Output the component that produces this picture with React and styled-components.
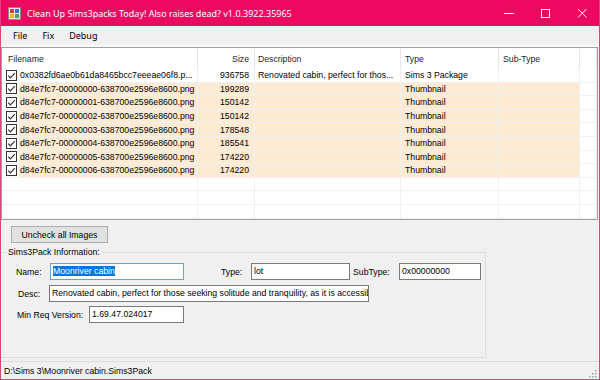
import React from 'react';
import styled, { createGlobalStyle } from 'styled-components';

const GlobalStyle = createGlobalStyle`
  html, body {
    margin: 0;
    padding: 0;
    background: #f0f0f0;
  }
  body {
    font-family: "Liberation Sans", Arial, sans-serif;
  }
`;

const Window = styled.div`
  width: 600px;
  height: 380px;
  box-sizing: border-box;
  display: flex;
  flex-direction: column;
  background: #f0f0f0;
  border: 1px solid #e2407f;
  border-top: none;
  overflow: hidden;
`;

const TitleBar = styled.div`
  height: 26px;
  flex: none;
  margin: 0 -1px;
  display: flex;
  align-items: center;
  background: #eb0a60;
  color: #fff;
  font-family: "Noto Sans", sans-serif;
  font-size: 9px;
`;

const AppIcon = styled.svg`
  margin: 0 6px 0 8px;
  flex: none;
`;

const Title = styled.div`
  flex: 1;
  white-space: nowrap;
`;

const WinButton = styled.div`
  width: 36.5px;
  height: 26px;
  display: flex;
  align-items: center;
  justify-content: center;
`;

const MenuBar = styled.div`
  height: 19px;
  flex: none;
  display: flex;
  align-items: center;
  gap: 15px;
  padding-left: 12px;
  background: #f0f0f0;
  font-family: "Noto Sans", sans-serif;
  font-size: 9px;
  color: #000;
`;

const MenuItem = styled.span``;

const MenuGap = styled.div`
  height: 2px;
  flex: none;
  background: #f9f9f9;
`;

const COLS = '196px 57px 146px 98px 81px 1fr';

const List = styled.div`
  height: 173px;
  flex: none;
  margin-right: 1px;
  box-sizing: border-box;
  border: 1px solid #a0a0a0;
  background: #fff;
  overflow: hidden;
  font-size: 8.7px;
  color: #000;
`;

const Header = styled.div`
  display: grid;
  grid-template-columns: ${COLS};
  height: 21px;
`;

const HeadCell = styled.div`
  display: flex;
  align-items: center;
  justify-content: ${(p) => (p.$right ? 'flex-end' : 'flex-start')};
  padding: 0 ${(p) => (p.$right ? '5px' : '0')} 0 ${(p) => p.$pl || 4}px;
  border-right: 1px solid #e5e5e5;
  margin: 1px 0 1px;
  color: #1e1e1e;
  white-space: nowrap;
`;

const Row = styled.div`
  display: grid;
  grid-template-columns: ${COLS};
  height: 13.6px;
  box-sizing: border-box;
  border-bottom: 1px solid #f0f0f0;
`;

const Cell = styled.div`
  display: flex;
  align-items: center;
  justify-content: ${(p) => (p.$right ? 'flex-end' : 'flex-start')};
  padding: 0 ${(p) => (p.$right ? '5px' : '0')} 0 ${(p) => (p.$right ? 0 : p.$pl || 4)}px;
  background: ${(p) => (p.$hl ? '#fdead2' : 'transparent')};
  border-right: 1px solid #f0f0f0;
  white-space: nowrap;
  overflow: hidden;
  min-width: 0;
`;

const NameCell = styled.div`
  display: flex;
  align-items: center;
  padding-left: 4px;
  border-right: 1px solid #f0f0f0;
  overflow: hidden;
  min-width: 0;
`;

const NameText = styled.div`
  flex: 1;
  align-self: stretch;
  display: flex;
  align-items: center;
  margin-left: 2px;
  padding-left: 1px;
  background: ${(p) => (p.$hl ? '#fdead2' : 'transparent')};
  white-space: nowrap;
  overflow: hidden;
`;

const Panel = styled.div`
  flex: 1;
  display: flex;
  flex-direction: column;
  align-items: flex-start;
  font-size: 8.7px;
  color: #000;
`;

const Button = styled.div`
  margin: 6px 0 0 10px;
  width: 97px;
  height: 17px;
  box-sizing: border-box;
  display: flex;
  align-items: center;
  justify-content: center;
  background: #e1e1e1;
  border: 1px solid #adadad;
`;

const GroupBox = styled.fieldset`
  margin: 4px 0 0;
  padding: 0;
  width: 485px;
  height: 111px;
  box-sizing: border-box;
  border: 1px solid #dcdcdc;
  border-left: none;
  min-inline-size: 0;
`;

const Legend = styled.legend`
  margin-left: 5px;
  padding: 0 2px;
  font-size: 8.7px;
  line-height: 11px;
`;

const FormRow = styled.div`
  display: flex;
  align-items: center;
  margin-top: ${(p) => p.$mt}px;
  padding-left: ${(p) => p.$pl}px;
`;

const Label = styled.div`
  width: ${(p) => p.$w}px;
  margin-left: ${(p) => p.$ml || 0}px;
  flex: none;
  white-space: nowrap;
`;

const TextBox = styled.div`
  width: ${(p) => p.$w}px;
  height: 17px;
  flex: none;
  box-sizing: border-box;
  border: 1px solid ${(p) => (p.$focus ? '#6f9fd3' : '#7a7a7a')};
  background: #fff;
  padding: 0 2px;
  line-height: 15px;
  white-space: nowrap;
  overflow: hidden;
`;

const Selected = styled.span`
  background: #0078d7;
  color: #fff;
`;

const StatusBar = styled.div`
  height: 18px;
  flex: none;
  box-sizing: border-box;
  border-top: 1px solid #dadada;
  display: flex;
  align-items: center;
  justify-content: space-between;
  padding-left: 3px;
  font-size: 8.7px;
  color: #000;
`;

const Grip = styled.svg`
  align-self: flex-end;
  margin: 0 2px 1px 0;
`;

function CheckBox() {
  return (
    <svg width="11" height="11" viewBox="0 0 11 11" style={{ flex: 'none' }}>
      <rect x="0.5" y="0.5" width="10" height="10" fill="#fff" stroke="#333" />
      <polyline points="2.2,5.6 4.4,7.8 8.8,3.2" fill="none" stroke="#333" strokeWidth="1.2" />
    </svg>
  );
}

const rows = [
  { name: '0x0382fd6ae0b61da8465bcc7eeeae06f8.p...', size: '936758', desc: 'Renovated cabin, perfect for thos...', type: 'Sims 3 Package', hl: false },
  ...['199289', '150142', '150142', '178548', '185541', '174220', '174220'].map((size, i) => ({
    name: `d84e7fc7-0000000${i}-638700e2596e8600.png`,
    size,
    desc: '',
    type: 'Thumbnail',
    hl: true,
  })),
];

export default function App() {
  return (
    <>
      <GlobalStyle />
      <Window>
        <TitleBar>
          <AppIcon width="13" height="13" viewBox="0 0 13 13">
            <rect x="0.5" y="0.5" width="12" height="12" fill="#e8e8e8" stroke="#8a8a8a" />
            <rect x="2" y="2" width="4" height="4" fill="#d93a2b" />
            <rect x="7" y="2" width="4" height="4" fill="#3a6fd0" />
            <rect x="2" y="7" width="4" height="4" fill="#f0b429" />
            <rect x="7" y="7" width="4" height="4" fill="#4aa35a" />
          </AppIcon>
          <Title>Clean Up Sims3packs Today! Also raises dead? v1.0.3922.35965</Title>
          <WinButton>
            <svg width="10" height="10" viewBox="0 0 10 10">
              <line x1="0" y1="5.5" x2="10" y2="5.5" stroke="#fff" strokeWidth="1" />
            </svg>
          </WinButton>
          <WinButton>
            <svg width="10" height="10" viewBox="0 0 10 10">
              <rect x="1.5" y="1.5" width="8" height="8" fill="none" stroke="#fff" strokeWidth="1" />
            </svg>
          </WinButton>
          <WinButton>
            <svg width="10" height="10" viewBox="0 0 10 10">
              <path d="M1 1 L9.5 9.5 M9.5 1 L1 9.5" stroke="#fff" strokeWidth="1" />
            </svg>
          </WinButton>
        </TitleBar>

        <MenuBar>
          <MenuItem>File</MenuItem>
          <MenuItem>Fix</MenuItem>
          <MenuItem>Debug</MenuItem>
        </MenuBar>
        <MenuGap />

        <List>
          <Header>
            <HeadCell $pl={6}>Filename</HeadCell>
            <HeadCell $right>Size</HeadCell>
            <HeadCell $pl={3}>Description</HeadCell>
            <HeadCell>Type</HeadCell>
            <HeadCell>Sub-Type</HeadCell>
            <HeadCell />
          </Header>
          {rows.map((r, i) => (
            <Row key={i}>
              <NameCell>
                <CheckBox />
                <NameText $hl={r.hl}>{r.name}</NameText>
              </NameCell>
              <Cell $hl={r.hl} $right>{r.size}</Cell>
              <Cell $hl={r.hl} $pl={3}>{r.desc}</Cell>
              <Cell $hl={r.hl}>{r.type}</Cell>
              <Cell $hl={r.hl} />
              <Cell />
            </Row>
          ))}
          {[0, 1, 2].map((i) => (
            <Row key={`e${i}`}>
              <Cell />
              <Cell />
              <Cell />
              <Cell />
              <Cell />
              <Cell />
            </Row>
          ))}
        </List>

        <Panel>
          <Button>Uncheck all Images</Button>
          <GroupBox>
            <Legend>Sims3Pack Information:</Legend>
            <FormRow $mt={5} $pl={15}>
              <Label $w={34}>Name:</Label>
              <TextBox $w={134} $focus>
                <Selected>Moonriver cabin</Selected>
              </TextBox>
              <Label $w={30} $ml={37}>Type:</Label>
              <TextBox $w={99}>lot</TextBox>
              <Label $w={46} $ml={3}>SubType:</Label>
              <TextBox $w={82}>0x00000000</TextBox>
            </FormRow>
            <FormRow $mt={5} $pl={17}>
              <Label $w={31}>Desc:</Label>
              <TextBox $w={320}>
                Renovated cabin, perfect for those seeking solitude and tranquility, as it is accessible
              </TextBox>
            </FormRow>
            <FormRow $mt={4} $pl={16}>
              <Label $w={72}>Min Req Version:</Label>
              <TextBox $w={95}>1.69.47.024017</TextBox>
            </FormRow>
          </GroupBox>
        </Panel>

        <StatusBar>
          <span>{'D:\\Sims 3\\Moonriver cabin.Sims3Pack'}</span>
          <Grip width="9" height="9" viewBox="0 0 9 9">
            {[
              [7, 1], [4, 4], [7, 4], [1, 7], [4, 7], [7, 7],
            ].map(([x, y]) => (
              <rect key={`${x}-${y}`} x={x} y={y} width="1.5" height="1.5" fill="#a0a0a0" />
            ))}
          </Grip>
        </StatusBar>
      </Window>
    </>
  );
}
